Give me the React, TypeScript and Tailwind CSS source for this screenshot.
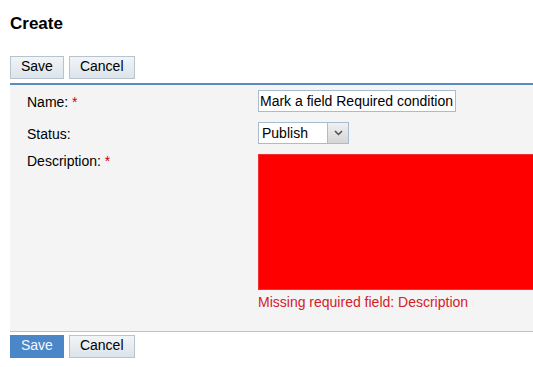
import React from "react";

function Btn({ label, primary = false }: { label: string; primary?: boolean }) {
  return (
    <button
      type="button"
      className={
        "h-[23px] border px-[10px] pb-[2px] text-[14px] leading-[19px] " +
        (primary
          ? "border-[#4a86c8] bg-[#4a86c8] text-[#f4f8fc]"
          : "border-[#b7c3cf] bg-gradient-to-b from-[#f2f5f8] to-[#dce3ea] text-black")
      }
    >
      {label}
    </button>
  );
}

function ButtonBar({ primary = false }: { primary?: boolean }) {
  return (
    <div className="flex gap-[5px]">
      <Btn label="Save" primary={primary} />
      <Btn label="Cancel" />
    </div>
  );
}

function Req() {
  return <span className="text-[#cc0000]"> *</span>;
}

export default function App() {
  return (
    <div className="h-[367px] w-[533px] overflow-hidden bg-white font-['Liberation_Sans',Arial,sans-serif] text-[14px] text-black">
      <div className="w-[640px] pl-[10px] pt-[14px]">
        <h1 className="text-[17px] font-bold leading-[20px]">Create</h1>

        <div className="mt-[22px]">
          <ButtonBar />
        </div>

        {/* form panel */}
        <div className="mt-[4px] border-t-2 border-b border-t-[#5b8bc2] border-b-[#b4c4d4] bg-[#f4f4f4] pt-[5px] pb-[21px]">
          <div className="flex">
            <div className="h-[22px] w-[248px] pl-[17px] pt-[2px] leading-[20px]">
              Name:<Req />
            </div>
            <div className="h-[22px] w-[198px] border border-[#a9bccd] bg-white pl-[1px] leading-[20px] whitespace-nowrap">
              Mark a field Required condition
            </div>
          </div>

          <div className="mt-[10px] flex">
            <div className="h-[22px] w-[248px] pl-[17px] pt-[2px] leading-[20px]">Status:</div>
            <div className="flex h-[22px] w-[91px] border border-[#a9bccd] bg-white">
              <span className="flex-1 pl-[3px] leading-[20px]">Publish</span>
              <span className="flex w-[21px] items-center justify-center border-l border-[#b9b9b9] bg-gradient-to-b from-[#f0f0f0] to-[#d6d6d6]">
                <svg width="9" height="6" viewBox="0 0 9 6" aria-hidden>
                  <path d="M1 1 L4.5 4.5 L8 1" fill="none" stroke="#4d4d4d" strokeWidth="1.5" />
                </svg>
              </span>
            </div>
          </div>

          <div className="mt-[10px] flex">
            <div className="w-[248px] pl-[17px] leading-[14px]">
              Description:<Req />
            </div>
            <div className="flex flex-col">
              <div className="h-[136px] w-[320px] border border-[#f03030] bg-[#ff0000]" />
              <p className="mt-[4px] leading-[16px] text-[#d4202a]">
                Missing required field: Description
              </p>
            </div>
          </div>
        </div>

        <div className="mt-[3px]">
          <ButtonBar primary />
        </div>
      </div>
    </div>
  );
}
